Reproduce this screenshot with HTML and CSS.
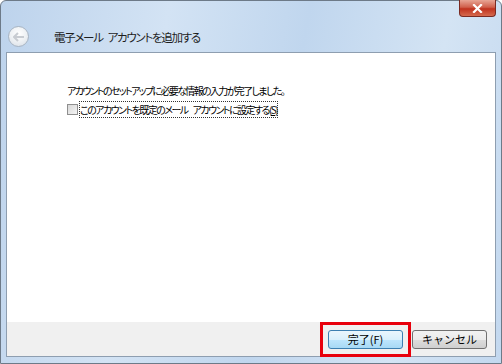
FILE: index.html
```html
<!DOCTYPE html>
<html lang="ja">
<head>
  <meta charset="UTF-8">
  <title>電子メール アカウントを追加する</title>
  <link rel="stylesheet" href="styles.css">
</head>
<body>
  <div class="window">
    <div class="close-btn">
      <svg width="11" height="9" viewBox="0 0 11 9">
        <path d="M2 1 L9 8 M9 1 L2 8" stroke="#fff" stroke-width="2.2" stroke-linecap="square"/>
      </svg>
    </div>
    <div class="caption">
      <div class="back-btn">
        <svg width="12" height="10" viewBox="0 0 12 10">
          <path d="M1 5 H11 M5 1 L1 5 L5 9" fill="none" stroke="#c8ccd2" stroke-width="2"/>
        </svg>
      </div>
      <span class="title">電子メール<span class="sp"></span>アカウントを追加する</span>
    </div>
    <div class="panel">
      <div class="content">
        <p class="message">アカウントのセットアップに必要な情報の入力が完了しました。</p>
        <label class="check">
          <span class="box"></span>
          <span class="check-text">このアカウントを既定のメール<span class="sp"></span>アカウントに設定する(<u>S</u>)</span>
        </label>
      </div>
      <div class="footer">
        <div class="highlight">
          <button class="btn btn-default">完了(F)</button>
        </div>
        <button class="btn">キャンセル</button>
      </div>
    </div>
  </div>
</body>
</html>
```

FILE: styles.css
```css
body {
  margin: 0;
  font-family: "Noto Sans CJK JP", "Noto Sans", sans-serif;
  font-feature-settings: "palt";
  background: #fff;
}
.window {
  position: relative;
  width: 502px;
  height: 364px;
  box-sizing: border-box;
  border: 1px solid #6d7a88;
  border-radius: 6px 6px 0 0;
  padding: 0 5px 6px 5px;
  background: linear-gradient(100deg, #bdd3ec 0%, #d3e3f4 30%, #c0d6ee 55%, #d4e4f4 80%, #c3d8ef 100%);
  display: flex;
  flex-direction: column;
}
.close-btn {
  position: absolute;
  top: -1px;
  right: 5px;
  width: 37px;
  height: 17px;
  border: 1px solid #7a2a22;
  border-top: none;
  border-radius: 0 0 4px 4px;
  box-sizing: border-box;
  background: linear-gradient(#e8a595 0%, #d0604c 45%, #c0321e 55%, #d56a4e 100%);
  display: flex;
  align-items: center;
  justify-content: center;
}
.caption {
  height: 51px;
  display: flex;
  align-items: center;
  padding-top: 20px;
  box-sizing: border-box;
}
.back-btn {
  width: 19px;
  height: 19px;
  margin-left: 2px;
  border-radius: 50%;
  border: 1px solid #a8b4c2;
  background: radial-gradient(circle at 50% 35%, #ffffff 0%, #eef1f4 50%, #d6dde5 100%);
  display: flex;
  align-items: center;
  justify-content: center;
}
.title {
  margin-left: 25px;
  font-size: 11.5px;
  letter-spacing: -1.3px;
  color: #1e1e1e;
}
.sp {
  display: inline-block;
  width: 5px;
}
.panel {
  flex: 1;
  display: flex;
  flex-direction: column;
  border: 1px solid #8e9eb0;
  background: #fff;
}
.content {
  flex: 1;
  padding: 30px 0 0 60px;
  font-size: 10px;
  color: #000;
}
.message {
  margin: 0 0 4px;
  letter-spacing: -1.65px;
}
.check {
  display: flex;
  align-items: center;
  gap: 2px;
}
.box {
  width: 9px;
  height: 9px;
  border: 1px solid #8f8f8f;
  background: linear-gradient(135deg, #d8d8d8, #f4f4f4);
}
.check-text {
  outline: 1px dotted #333;
  letter-spacing: -1.55px;
}
.footer {
  height: 34px;
  background: #f0f0f0;
  display: flex;
  align-items: center;
  justify-content: flex-end;
  padding-right: 8px;
  gap: 1px;
}
.highlight {
  border: 3px solid #e8000c;
  padding: 5px 5px;
  display: flex;
}
.btn {
  width: 75px;
  height: 19px;
  padding: 0;
  font-family: inherit;
  font-size: 11px;
  color: #000;
  border: 1px solid #707070;
  border-radius: 3px;
  background: linear-gradient(#f2f2f2 0%, #ebebeb 50%, #dddddd 51%, #cfcfcf 100%);
}
.btn-default {
  border-color: #3c7fb1;
  background: linear-gradient(#eaf6fd 0%, #d9f0fc 50%, #bee6fd 51%, #a7d9f5 100%);
}
```
